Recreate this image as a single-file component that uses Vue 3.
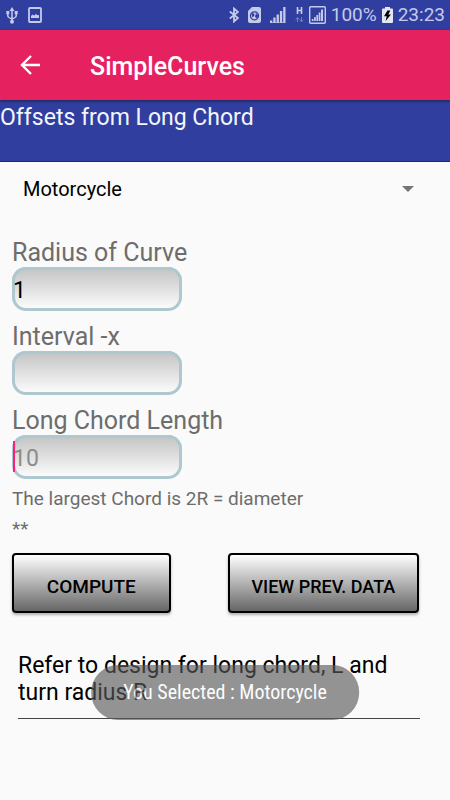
<script setup>
import { ref } from 'vue'

const vehicle = ref('Motorcycle')
const vehicles = ['Motorcycle', 'Car', 'Truck']
const fields = ref([
  { id: 'radius', label: 'Radius of Curve', value: '1', hint: '' },
  { id: 'interval', label: 'Interval -x', value: '', hint: '' },
  { id: 'chord', label: 'Long Chord Length', value: '', hint: '10', active: true }
])
const note = ref('Refer to design for long chord, L and turn radius R')
</script>

<template>
  <div class="screen">
    <div class="status">
      <div class="status-group">
        <svg class="icon" width="12" height="17" viewBox="0 0 12 17" fill="none" stroke="currentColor" stroke-width="1.5">
          <path d="M6 3v11M1.800 6v3Q2 10.500 6 12Q10 10.500 10.200 9V6" />
          <path d="M6 0L3.500 4h5zM.3 4h3v3.200H.3zM8.700 4h3v3.200h-3z" fill="currentColor" stroke="none" />
          <circle cx="6" cy="14.800" r="2" fill="currentColor" stroke="none" />
        </svg>
        <svg class="icon" width="14" height="16" viewBox="0 0 14 16" fill="none" stroke="currentColor">
          <rect x="1" y="1" width="12" height="14" rx="1" stroke-width="1.800" />
          <path d="M3 11V9l1.500-1.500L6 8.600 8 7l1.500 1.300L11 8v3z" fill="currentColor" stroke="none" />
        </svg>
      </div>
      <div class="status-group right">
        <svg class="icon radio" width="10" height="16" viewBox="0 0 10 16" fill="none" stroke="currentColor" stroke-width="1.800">
          <path d="M.8 4.500L9 11 5 14.500V1.500L9 5 .8 11.500" />
        </svg>
        <svg class="icon radio" width="13" height="16" viewBox="0 0 13 16">
          <path d="M4 0h7q2 0 2 2v12q0 2-2 2H2q-2 0-2-2V4z" fill="currentColor" />
          <circle cx="6.500" cy="8.800" r="4" fill="none" stroke="#303f9f" stroke-width="1.300" />
          <path d="M3.300 6l2.700.5.500 2-2 2zM8 6l2.500 2.500-1.500 3-2-1.500z" fill="#303f9f" />
        </svg>
        <svg class="icon radio" width="16" height="16" viewBox="0 0 16 16" fill="currentColor">
          <path d="M0 13.500h2.300V16H0zM3.300 10.500h2.300V16H3.300zM6.600 7.500h2.300V16H6.600zM9.900 4h2.300v12H9.900zM13.200 0h2.300v16h-2.300z" />
          <path d="M0 15h15v1H0z" opacity=".6" />
        </svg>
        <svg class="icon" width="9" height="16" viewBox="0 0 9 16" fill="none" stroke="currentColor">
          <path d="M2.500 0v7M6.500 0v7M2.500 3.500h4" stroke-width="1.600" />
          <path d="M2.500 15v-4M.8 12.500l1.700-2 1.700 2M6.500 10v4M4.800 12.800l1.700 2 1.700-2" stroke-width="1" opacity=".45" />
        </svg>
        <svg class="icon" width="17" height="18" viewBox="0 0 17 18">
          <rect x=".7" y=".7" width="15.600" height="16.600" rx="1" fill="none" stroke="currentColor" stroke-width="1.400" />
          <path d="M2.800 13h1.700v2H2.800zM5.100 11h1.700v4H5.100zM7.400 9h1.700v6H7.400zM9.700 6.500h1.700V15H9.700zM12 3.500h2V15h-2z" fill="currentColor" />
        </svg>
        <span class="status-text">100%</span>
        <svg class="icon" width="11" height="16" viewBox="0 0 11 16">
          <path d="M3 0h5v1.500h2q1 0 1 1V15q0 1-1 1H1q-1 0-1-1V2.500q0-1 1-1h2z" fill="#e4e6f4" />
          <path d="M5.500 3.500L2 9.300h2.700L3.600 14 9 7.500H6.300L8.300 3.500z" fill="#000" />
        </svg>
        <span class="status-text">23:23</span>
      </div>
    </div>

    <header class="appbar">
      <button class="back" type="button" aria-label="Back">
        <svg width="20" height="20" viewBox="0 0 20 20" fill="none" stroke="#fff" stroke-width="2.400">
          <path d="M20 10H2M11 1L2 10l9 9" />
        </svg>
      </button>
      <h1 class="title">SimpleCurves</h1>
    </header>

    <h2 class="banner">Offsets from Long Chord</h2>

    <main class="content">
      <div class="spinner">
        <select v-model="vehicle" class="select" aria-label="Vehicle">
          <option v-for="v in vehicles" :key="v">{{ v }}</option>
        </select>
        <svg class="arrow" width="12" height="6" viewBox="0 0 12 6" fill="#757575"><path d="M0 0h12L6 6z" /></svg>
      </div>

      <form class="form" @submit.prevent>
        <div class="fields">
          <div v-for="f in fields" :key="f.id" class="field">
            <label class="label" :for="f.id">{{ f.label }}</label>
            <div class="box">
              <input :id="f.id" v-model="f.value" class="input" type="text" inputmode="numeric" :placeholder="f.hint" />
              <span v-if="f.active" class="caret"></span>
            </div>
          </div>
        </div>
        <p class="help">The largest Chord is 2R = diameter</p>
        <p class="help">**</p>
        <div class="actions">
          <button class="btn compute" type="submit">COMPUTE</button>
          <button class="btn view" type="button">VIEW PREV. DATA</button>
        </div>
        <textarea v-model="note" class="note" rows="2" aria-label="Note"></textarea>
      </form>
    </main>

    <div class="toast" role="status">You Selected : {{ vehicle }}</div>
  </div>
</template>

<style>
body {
  margin: 0;
  background: #fafafa;
}
</style>

<style scoped>
.screen {
  position: relative;
  min-height: 100vh;
  box-sizing: border-box;
  background: #fafafa;
  color: #000;
  font-family: Roboto, "Noto Sans", sans-serif;
}
.status {
  display: flex;
  justify-content: space-between;
  align-items: center;
  height: 30px;
  padding: 0 5px 0 6px;
  background: #303f9f;
  color: #c5cae9;
}
.status-group {
  display: flex;
  align-items: center;
  gap: 10px;
}
.status-group.right {
  gap: 5px;
}
.radio {
  margin-right: 4px;
}
.icon {
  display: block;
  flex: none;
}
.status-text {
  font-size: 19px;
  line-height: 30px;
}
.appbar {
  position: relative;
  display: flex;
  align-items: center;
  height: 70px;
  background: #e6215f;
  box-shadow: 0 1px 3px rgba(0, 0, 0, 0.5);
}
.back {
  display: flex;
  padding: 0 20px;
  border: 0;
  background: none;
}
.title {
  margin: 4px 0 0 30px;
  color: #fff;
  font-size: 25px;
  font-weight: 500;
  line-height: 32px;
}
.banner {
  box-sizing: border-box;
  min-height: 62px;
  margin: 0;
  padding-top: 3px;
  border-bottom: 1px solid #1a2590;
  background: #303f9f;
  color: #f4f5fb;
  font-size: 23px;
  font-weight: 400;
  line-height: 30px;
}
.content {
  padding: 0 12px;
}
.spinner {
  display: flex;
  align-items: center;
  height: 54px;
  padding: 0 24px 0 11px;
}
.select {
  flex: 1;
  padding: 0;
  border: 0;
  appearance: none;
  background: none;
  color: #000;
  font-family: inherit;
  font-size: 20px;
  line-height: 28px;
}
.arrow {
  flex: none;
}
.form {
  padding-top: 23px;
}
.fields {
  display: flex;
  flex-direction: column;
  gap: 12px;
  margin-bottom: 5px;
}
.field {
  display: flex;
  flex-direction: column;
}
.label {
  color: #6d6d6d;
  font-size: 25px;
  line-height: 28px;
}
.box {
  position: relative;
  width: 40%;
}
.input {
  display: block;
  box-sizing: border-box;
  width: 100%;
  height: 44px;
  padding: 3px 0 0 1px;
  border: 0;
  border-radius: 14px;
  outline: 0;
  background: linear-gradient(#c2c2c2, #fff);
  box-shadow: inset 0 0 0 3px #adc8cf;
  color: #000;
  font-family: inherit;
  font-size: 23px;
}
.input::placeholder {
  color: #8c8c8c;
}
.caret {
  position: absolute;
  top: 6px;
  left: 1px;
  width: 2px;
  height: 31px;
  background: #ff1f7a;
}
.help {
  margin: 0;
  color: #6d6d6d;
  font-size: 19px;
  line-height: 30px;
}
.actions {
  display: flex;
  justify-content: space-between;
  margin: 9px 19px 0 0;
}
.btn {
  height: 60px;
  padding: 6px 0 0;
  border: 2px solid #000;
  border-radius: 4px;
  background: linear-gradient(#fff, #666);
  box-shadow: 0 2px 3px rgba(0, 0, 0, 0.3);
  color: #000;
  font-family: inherit;
  font-weight: 500;
}
.compute {
  flex: 0 0 39%;
  font-size: 19px;
}
.view {
  flex: 0 0 47%;
  font-size: 18px;
}
.note {
  display: block;
  box-sizing: border-box;
  width: calc(100% - 24px);
  height: 80px;
  margin: 26px 0 0 6px;
  padding: 13px 0 0;
  border: 0;
  border-bottom: 1px solid #444;
  outline: 0;
  resize: none;
  overflow: hidden;
  background: none;
  color: #000;
  font-family: inherit;
  font-size: 23px;
  line-height: 27px;
}
.toast {
  position: absolute;
  bottom: 80px;
  left: 50%;
  padding: 0 32px;
  border-radius: 27px;
  background: #5a5a5a;
  opacity: 0.64;
  color: #fff;
  font-family: "Roboto Condensed", Roboto, sans-serif;
  font-size: 20px;
  line-height: 55px;
  white-space: nowrap;
  transform: translateX(-50%);
}
</style>
